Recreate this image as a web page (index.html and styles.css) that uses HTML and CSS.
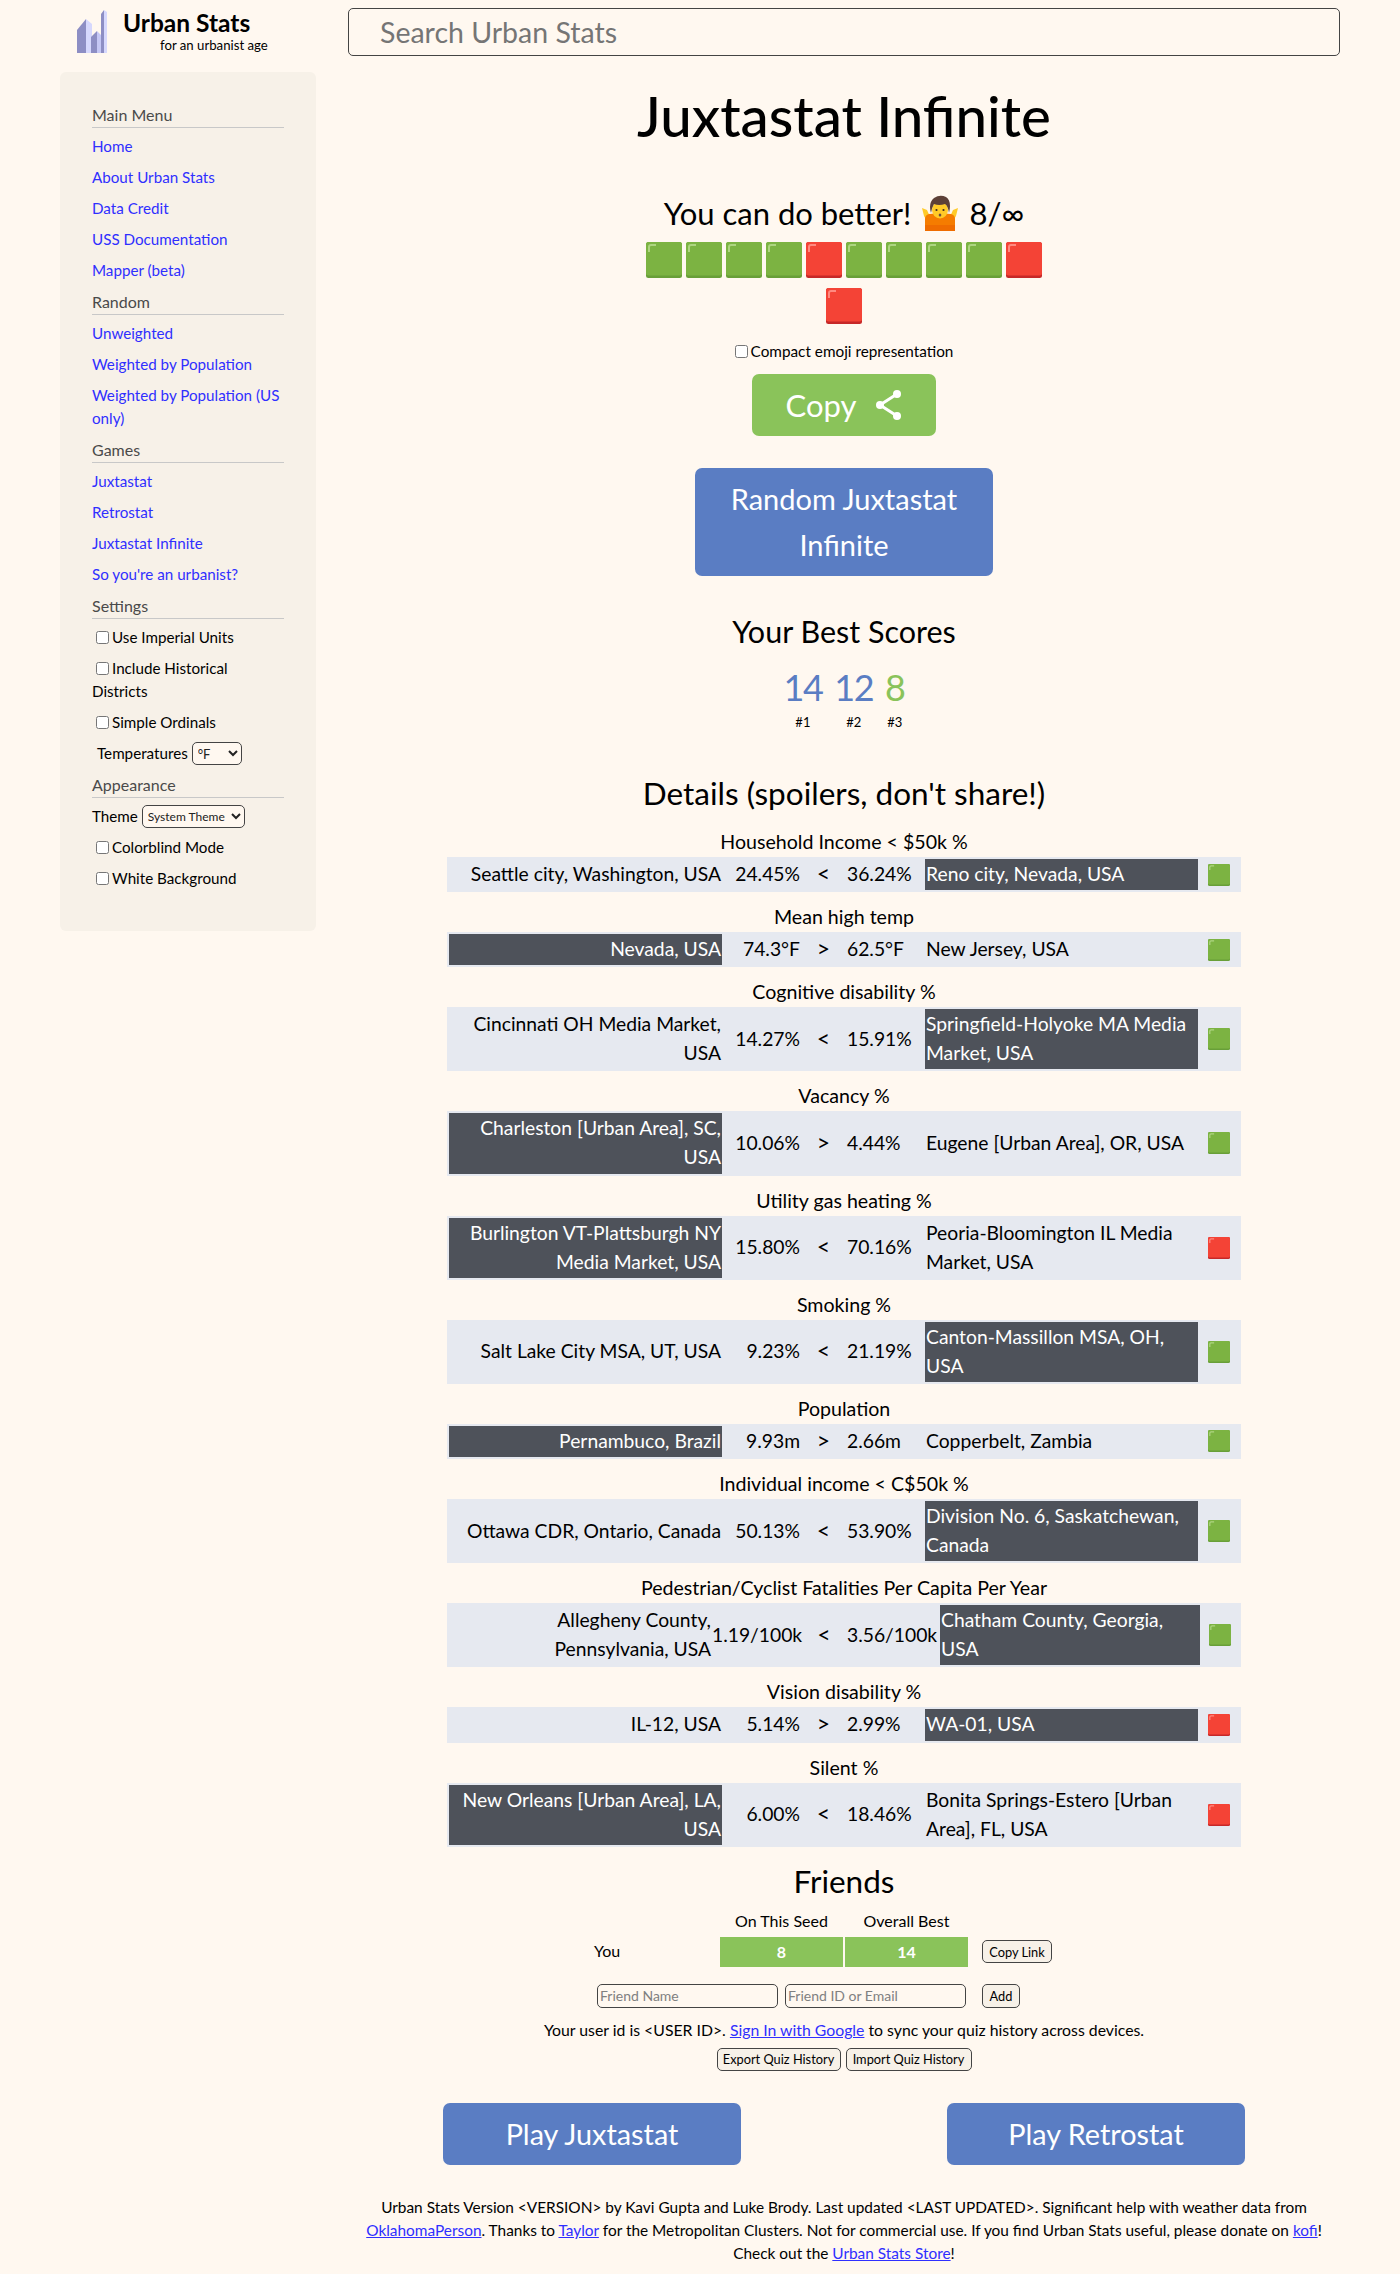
FILE: index.html
```html
<!DOCTYPE html>
<html lang="en">
<head>
<meta charset="utf-8">
<title>Juxtastat Infinite</title>
<link rel="stylesheet" href="styles.css">
</head>
<body>
<svg class="defs" width="0" height="0" aria-hidden="true">
  <symbol id="g" viewBox="0 0 36 36"><rect width="36" height="36" rx="2.5" fill="#689f38"/><rect width="36" height="33.5" rx="2.5" fill="#7cb342"/><path d="M3 10V5q0-2 2-2h5" fill="none" stroke="#aed581" stroke-width="2"/></symbol>
  <symbol id="r" viewBox="0 0 36 36"><rect width="36" height="36" rx="2.5" fill="#c62828"/><rect width="36" height="33.5" rx="2.5" fill="#f44336"/><path d="M3 10V5q0-2 2-2h5" fill="none" stroke="#ff8a80" stroke-width="2"/></symbol>
</svg>
<header class="top">
  <div class="brand">
    <svg class="logo" width="36" height="46" viewBox="75 8 36 46">
      <path d="M77 53V30l9-11v34z" fill="#8d8ec4"/><path d="M86 19l6 5v29h-6z" fill="#d6d8fd"/>
      <path d="M91 53V37l6-6v22z" fill="#8d8ec4"/><path d="M97 31l4 4v18h-4z" fill="#c5c7f5"/>
      <path d="M101 53V14l3-4v43z" fill="#8d8ec4"/><path d="M104 10l3 2v41h-3z" fill="#d6d8fd"/>
    </svg>
    <div class="brand-text">
      <div class="brand-name">Urban Stats</div>
      <div class="brand-tag">for an urbanist age</div>
    </div>
  </div>
  <input class="search" type="text" placeholder="Search Urban Stats">
</header>
<div class="layout">
  <nav class="side">
    <h4 class="side-h">Main Menu</h4>
    <a class="side-a" href="#">Home</a>
    <a class="side-a" href="#">About Urban Stats</a>
    <a class="side-a" href="#">Data Credit</a>
    <a class="side-a" href="#">USS Documentation</a>
    <a class="side-a" href="#">Mapper (beta)</a>
    <h4 class="side-h">Random</h4>
    <a class="side-a" href="#">Unweighted</a>
    <a class="side-a" href="#">Weighted by Population</a>
    <a class="side-a" href="#">Weighted by Population (US only)</a>
    <h4 class="side-h">Games</h4>
    <a class="side-a" href="#">Juxtastat</a>
    <a class="side-a" href="#">Retrostat</a>
    <a class="side-a" href="#">Juxtastat Infinite</a>
    <a class="side-a" href="#">So you're an urbanist?</a>
    <h4 class="side-h">Settings</h4>
    <label class="side-c"><input type="checkbox">Use Imperial Units</label>
    <label class="side-c"><input type="checkbox">Include Historical Districts</label>
    <label class="side-c"><input type="checkbox">Simple Ordinals</label>
    <label class="side-c temp">Temperatures <select class="sel sel-t"><option>°F</option></select></label>
    <h4 class="side-h">Appearance</h4>
    <label class="side-c theme">Theme <select class="sel sel-s"><option>System Theme</option></select></label>
    <label class="side-c"><input type="checkbox">Colorblind Mode</label>
    <label class="side-c"><input type="checkbox">White Background</label>
  </nav>
  <main class="main">
    <h1 class="title">Juxtastat Infinite</h1>
    <div class="verdict">You can do better!
      <svg class="shrug" width="36" height="36" viewBox="0 0 36 36">
        <path d="M0 13l5 2 4 9h18l4-9 5-2-2 8-4 7H6l-4-7z" fill="#ffca28"/>
        <path d="M3 36V24q0-4 4-5l11-1 11 1q4 1 4 5v12z" fill="#f57c00"/>
        <path d="M3 30h30v6H3z" fill="#ef6c00"/>
        <ellipse cx="18" cy="15" rx="8" ry="8.5" fill="#ffca28"/>
        <path d="M9 18Q6 8 12 3q6-4 12-1 6 4 3 16-1-7-4-9-6 2-11 0-2 3-3 9z" fill="#5d4037"/>
        <circle cx="14.5" cy="15" r="1.1" fill="#3e2723"/><circle cx="21.5" cy="15" r="1.1" fill="#3e2723"/>
        <ellipse cx="18" cy="20" rx="1.3" ry="1.6" fill="#6d4c41"/>
      </svg>
      8/∞</div>
    <div class="tiles">
      <svg class="tile"><use href="#g"/></svg><svg class="tile"><use href="#g"/></svg><svg class="tile"><use href="#g"/></svg><svg class="tile"><use href="#g"/></svg><svg class="tile"><use href="#r"/></svg><svg class="tile"><use href="#g"/></svg><svg class="tile"><use href="#g"/></svg><svg class="tile"><use href="#g"/></svg><svg class="tile"><use href="#g"/></svg><svg class="tile"><use href="#r"/></svg><svg class="tile"><use href="#r"/></svg>
    </div>
    <label class="compact"><input type="checkbox">Compact emoji representation</label>
    <button class="copy">Copy
      <svg width="26" height="32" viewBox="0 0 26 32"><path d="M21 5L4 16l17 11" fill="none" stroke="#fff" stroke-width="3"/><circle cx="21" cy="5" r="4" fill="#fff"/><circle cx="4" cy="16" r="4" fill="#fff"/><circle cx="21" cy="27" r="4" fill="#fff"/></svg>
    </button>
    <button class="random">Random Juxtastat Infinite</button>
    <h2 class="best-h">Your Best Scores</h2>
    <div class="scores">
      <div class="score"><div class="num blue">14</div><div class="rank">#1</div></div>
      <div class="score"><div class="num blue">12</div><div class="rank">#2</div></div>
      <div class="score"><div class="num green">8</div><div class="rank">#3</div></div>
    </div>
    <h2 class="details-h">Details (spoilers, don't share!)</h2>

    <section class="stat">
      <div class="stat-t">Household Income &lt; $50k %</div>
      <div class="row"><div class="l">Seattle city, Washington, USA</div><div class="v">24.45%</div><div class="op">&lt;</div><div class="w">36.24%</div><div class="r win">Reno city, Nevada, USA</div><svg class="mark"><use href="#g"/></svg></div>
    </section>
    <section class="stat">
      <div class="stat-t">Mean high temp</div>
      <div class="row"><div class="l win">Nevada, USA</div><div class="v">74.3°F</div><div class="op">&gt;</div><div class="w">62.5°F</div><div class="r">New Jersey, USA</div><svg class="mark"><use href="#g"/></svg></div>
    </section>
    <section class="stat">
      <div class="stat-t">Cognitive disability %</div>
      <div class="row"><div class="l">Cincinnati OH Media Market, USA</div><div class="v">14.27%</div><div class="op">&lt;</div><div class="w">15.91%</div><div class="r win">Springfield-Holyoke MA Media Market, USA</div><svg class="mark"><use href="#g"/></svg></div>
    </section>
    <section class="stat">
      <div class="stat-t">Vacancy %</div>
      <div class="row"><div class="l win">Charleston [Urban Area], SC, USA</div><div class="v">10.06%</div><div class="op">&gt;</div><div class="w">4.44%</div><div class="r">Eugene [Urban Area], OR, USA</div><svg class="mark"><use href="#g"/></svg></div>
    </section>
    <section class="stat">
      <div class="stat-t">Utility gas heating %</div>
      <div class="row"><div class="l win">Burlington VT-Plattsburgh NY Media Market, USA</div><div class="v">15.80%</div><div class="op">&lt;</div><div class="w">70.16%</div><div class="r">Peoria-Bloomington IL Media Market, USA</div><svg class="mark"><use href="#r"/></svg></div>
    </section>
    <section class="stat">
      <div class="stat-t">Smoking %</div>
      <div class="row"><div class="l">Salt Lake City MSA, UT, USA</div><div class="v">9.23%</div><div class="op">&lt;</div><div class="w">21.19%</div><div class="r win">Canton-Massillon MSA, OH, USA</div><svg class="mark"><use href="#g"/></svg></div>
    </section>
    <section class="stat">
      <div class="stat-t">Population</div>
      <div class="row"><div class="l win">Pernambuco, Brazil</div><div class="v">9.93m</div><div class="op">&gt;</div><div class="w">2.66m</div><div class="r">Copperbelt, Zambia</div><svg class="mark"><use href="#g"/></svg></div>
    </section>
    <section class="stat">
      <div class="stat-t">Individual income &lt; C$50k %</div>
      <div class="row"><div class="l">Ottawa CDR, Ontario, Canada</div><div class="v">50.13%</div><div class="op">&lt;</div><div class="w">53.90%</div><div class="r win">Division No. 6, Saskatchewan, Canada</div><svg class="mark"><use href="#g"/></svg></div>
    </section>
    <section class="stat">
      <div class="stat-t">Pedestrian/Cyclist Fatalities Per Capita Per Year</div>
      <div class="row wide"><div class="l">Allegheny County, Pennsylvania, USA</div><div class="v">1.19/100k</div><div class="op">&lt;</div><div class="w">3.56/100k</div><div class="r win">Chatham County, Georgia, USA</div><svg class="mark"><use href="#g"/></svg></div>
    </section>
    <section class="stat">
      <div class="stat-t">Vision disability %</div>
      <div class="row"><div class="l">IL-12, USA</div><div class="v">5.14%</div><div class="op">&gt;</div><div class="w">2.99%</div><div class="r win">WA-01, USA</div><svg class="mark"><use href="#r"/></svg></div>
    </section>
    <section class="stat">
      <div class="stat-t">Silent %</div>
      <div class="row"><div class="l win">New Orleans [Urban Area], LA, USA</div><div class="v">6.00%</div><div class="op">&lt;</div><div class="w">18.46%</div><div class="r">Bonita Springs-Estero [Urban Area], FL, USA</div><svg class="mark"><use href="#r"/></svg></div>
    </section>

    <h2 class="friends-h">Friends</h2>
    <div class="ft ft-head"><div></div><div>On This Seed</div><div>Overall Best</div><div></div></div>
    <div class="ft ft-you"><div class="you">You</div><div class="fcell">8</div><div class="fcell">14</div><button class="mini">Copy Link</button></div>
    <div class="add-row">
      <input class="friend" type="text" placeholder="Friend Name">
      <input class="friend" type="text" placeholder="Friend ID or Email">
      <button class="mini">Add</button>
    </div>
    <p class="uid">Your user id is &lt;USER ID&gt;. <a href="#">Sign In with Google</a> to sync your quiz history across devices.</p>
    <div class="hist"><button class="mini">Export Quiz History</button><button class="mini">Import Quiz History</button></div>
    <div class="plays"><button class="play">Play Juxtastat</button><button class="play">Play Retrostat</button></div>
    <footer class="foot">Urban Stats Version &lt;VERSION&gt; by Kavi Gupta and Luke Brody. Last updated &lt;LAST UPDATED&gt;. Significant help with weather data from <a href="#">OklahomaPerson</a>. Thanks to <a href="#">Taylor</a> for the Metropolitan Clusters. Not for commercial use. If you find Urban Stats useful, please donate on <a href="#">kofi</a>! Check out the <a href="#">Urban Stats Store</a>!</footer>
  </main>
</div>
</body>
</html>
```

FILE: styles.css
```css
* { box-sizing: border-box; }
html, body { margin: 0; padding: 0; }
body { background: #fff8f0; color: #000; font-family: "Lato", "Noto Sans", sans-serif; font-size: 16px; line-height: 23px; }
a { color: #2f2fff; }
button { font-family: inherit; cursor: pointer; }
.defs { position: absolute; }

.top { display: flex; height: 64px; padding-top: 8px; }
.brand { width: 348px; flex: none; display: flex; padding-left: 75px; }
.logo { flex: none; }
.brand-text { margin-left: 12px; padding-top: 1px; }
.brand-name { font-size: 24.5px; font-weight: 700; line-height: 28px; }
.brand-tag { font-size: 13.2px; line-height: 17px; margin-left: 37px; }
.search { width: 992px; height: 48px; border: 1px solid #444; border-radius: 5px; background: #fff8f0; font: 28.5px "Lato", sans-serif; padding: 0 31px; }
.search::placeholder { color: #757575; }

.layout { display: flex; align-items: flex-start; padding-left: 60px; }
.side { width: 256px; height: 859px; margin-top: 8px; flex: none; background: #f7f1e8; border-radius: 6px; padding: 31px 32px 0; font-size: 15.2px; }
.side-h { margin: 0 0 7px; font-size: 16px; font-weight: 400; color: #4a4a4a; line-height: 23px; border-bottom: 1px solid #c8c8c8; height: 25px; }
.side-a { display: block; color: #2f2fff; text-decoration: none; margin-bottom: 8px; }
.side-c { display: block; margin-bottom: 8px; }
.side-c input { margin: 0 3px 0 4px; vertical-align: -1px; }
.temp, .theme { height: 23px; display: flex; align-items: center; gap: 4px; }
.temp { padding-left: 5px; }
.sel { background: #fff8f0; border: 1px solid #444; border-radius: 5px; font-family: "Lato", sans-serif; height: 23px; padding: 0 1px; color: #222; }
.sel-t { width: 50px; font-size: 13px; }
.sel-s { width: 103px; font-size: 12px; }

.main { width: 992px; margin-left: 32px; display: flex; flex-direction: column; align-items: center; text-align: center; }
.title { margin: 15px 0 0; font-size: 56.4px; font-weight: 500; line-height: 72px; }
.verdict { margin-top: 40px; font-size: 31px; line-height: 44px; padding-bottom: 2px; display: flex; align-items: center; gap: 11px; }
.tiles { margin-top: 5px; width: 400px; display: flex; flex-wrap: wrap; justify-content: center; gap: 10px 4px; }
.tile { width: 36px; height: 36px; display: block; }
.compact { margin-top: 16px; display: block; font-size: 15.3px; }
.compact input { margin: 0 3px 0 0; vertical-align: -1px; }
.copy { margin-top: 11px; width: 184px; height: 62px; border: 0; border-radius: 7px; background: #8ac35a; color: #fff; font-size: 31px; display: flex; align-items: center; justify-content: center; gap: 20px; }
.random { margin-top: 32px; width: 298px; height: 108px; border: 0; border-radius: 7px; background: #5a7dc3; color: #fff; font-size: 29px; line-height: 46px; padding: 8px 16px; }
.best-h, .details-h, .friends-h { margin: 0; font-weight: 400; }
.best-h { margin-top: 33px; font-size: 30.5px; line-height: 44px; }
.details-h { margin-top: 43px; font-size: 31.5px; line-height: 40px; padding-bottom: 4px; }
.friends-h { margin-top: 14px; font-size: 31.5px; line-height: 41px; padding-bottom: 3px; }
.scores { margin-top: 14px; display: flex; gap: 12px; }
.score { display: flex; flex-direction: column; }
.num { font-size: 36px; line-height: 40px; letter-spacing: -1.5px; }
.rank { font-size: 13px; line-height: 16px; margin-top: 7px; }
.blue { color: #5a7dc3; }
.green { color: #8ac35a; }

.stat { width: 794px; margin-top: 11px; }
.stat-t { font-size: 19.6px; line-height: 27px; padding-bottom: 2px; }
.row { display: grid; grid-template-columns: 273px 78px 47px 78px 273px 1fr; align-items: center; background: #e6e9f0; padding: 2px; font-size: 19.3px; line-height: 29.1px; }
.wide { grid-template-columns: 263px 89px 46px 93px 260px 1fr; }
.l, .r { padding: 0 1px 2px 1px; align-self: stretch; display: flex; align-items: center; }
.l { justify-content: flex-end; text-align: right; }
.r { text-align: left; }
.win { background: #4e525a; color: #fff; }
.v, .w, .op { padding-bottom: 2px; white-space: nowrap; }
.v { text-align: right; }
.w { text-align: left; }
.op { font-size: 23px; }
.mark { width: 22px; height: 22px; justify-self: center; }

.ft { display: grid; grid-template-columns: 128px 123px 123px 84px; column-gap: 2px; width: 508px; }
.ft-head { margin-top: 4px; font-size: 16px; }
.ft-you { margin-top: 5px; align-items: center; }
.you { text-align: left; padding-left: 4px; margin-top: -2px; }
.fcell { height: 30px; line-height: 30px; background: #8ac35a; color: #fff; font-weight: 700; }
.mini { border: 1px solid #444; border-radius: 5px; background: #f7f1e8; color: #000; font-size: 12.8px; height: 23px; line-height: 20px; padding: 0 6px; }
.ft-you .mini { justify-self: start; margin-left: 12px; width: 70px; padding: 0; }
.add-row { margin-top: 17px; display: flex; align-items: center; width: 494px; }
.friend { width: 181px; height: 24px; margin-right: 7px; border: 1px solid #444; border-radius: 5px; background: #fff8f0; font: 14px "Lato", sans-serif; padding: 0 2px; }
.friend::placeholder { color: #808080; }
.add-row .mini { margin-left: 9px; width: 38px; padding: 0; height: 24px; }
.uid { margin: 10px 0 0; font-size: 15.8px; }
.hist { margin-top: 7px; display: flex; gap: 5px; }
.hist .mini { width: 124px; padding: 0; }
.hist .mini + .mini { width: 126px; }
.plays { margin-top: 32px; width: 802px; display: flex; justify-content: space-between; }
.play { width: 298px; height: 62px; border: 0; border-radius: 7px; background: #5a7dc3; color: #fff; font-size: 28.8px; }
.foot { margin-top: 31px; font-size: 15.4px; line-height: 23px; width: 992px; }
```
